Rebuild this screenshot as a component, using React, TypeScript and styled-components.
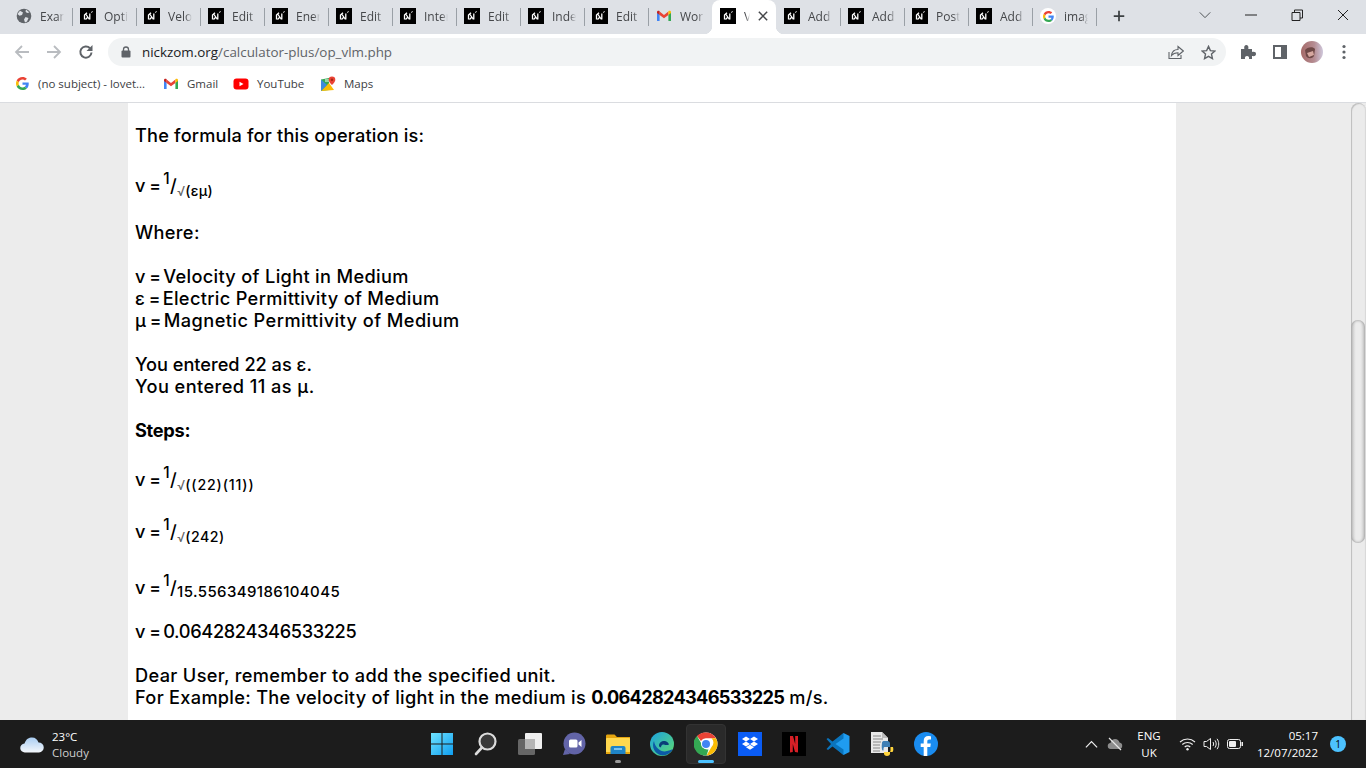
import React from "react";
import styled, { createGlobalStyle } from "styled-components";

const Global = createGlobalStyle`
  html, body { margin: 0; padding: 0; overflow: hidden; background: #fff; }
  * { box-sizing: border-box; }
`;

const Screen = styled.div`
  width: 1366px; height: 768px; display: flex; flex-direction: column; overflow: hidden;
  font-family: "Open Sans", "Liberation Sans", sans-serif;
`;

/* ---------- tab strip ---------- */
const TabStrip = styled.div`
  height: 34px; flex: none; background: #dee1e6; display: flex; align-items: stretch; padding-left: 8px;
`;
const Tab = styled.div<{ $active?: boolean; $sep?: boolean }>`
  width: 64px; position: relative; display: flex; align-items: center; gap: 8px; padding: 0 8px 2px;
  background: ${p => (p.$active ? "#fff" : "transparent")};
  border-radius: ${p => (p.$active ? "8px 8px 0 0" : "0")};
  ${p => p.$sep && `&::after { content: ""; position: absolute; right: -1px; top: 8px; width: 1px; height: 18px; background: #9aa0a6; }`}
  ${p => p.$active && `
    &::before { content: ""; position: absolute; left: -8px; bottom: 0; width: 8px; height: 8px; background: radial-gradient(circle at 0 0, transparent 8px, #fff 8.5px); }
    & > i { position: absolute; right: -8px; bottom: 0; width: 8px; height: 8px; background: radial-gradient(circle at 100% 0, transparent 8px, #fff 8.5px); }
  `}
`;
const TabTitle = styled.span<{ $active?: boolean }>`
  flex: 1; min-width: 0; overflow: hidden; white-space: nowrap; font-size: 12px; color: #45474a;
  -webkit-mask-image: linear-gradient(to right, #000 ${p => (p.$active ? "30%" : "72%")}, transparent);
  mask-image: linear-gradient(to right, #000 ${p => (p.$active ? "30%" : "72%")}, transparent);
`;
const IconSlot = styled.span`
  width: 16px; height: 16px; flex: none; display: flex; align-items: center; justify-content: center;
`;
const NewTab = styled.div`
  width: 46px; display: flex; align-items: center; justify-content: center; padding-bottom: 2px;
`;
const WindowControls = styled.div`
  margin-left: auto; display: flex; align-items: stretch; padding-bottom: 4px;
`;
const WinButton = styled.div`
  width: 46px; display: flex; align-items: center; justify-content: center;
`;

/* ---------- toolbar ---------- */
const Toolbar = styled.div`
  height: 34px; flex: none; background: #fff; display: flex; align-items: center; padding-top: 2px;
`;
const NavButton = styled.div`
  width: 32px; height: 28px; display: flex; align-items: center; justify-content: center; flex: none;
`;
const NavGroup = styled.div`
  display: flex; padding-left: 6px; width: 108px; flex: none;
`;
const Omnibox = styled.div`
  width: 1118px; height: 28px; background: #f1f3f4; border-radius: 14px; display: flex; align-items: center; padding: 0 2px 0 12px; flex: none;
`;
const Url = styled.div`
  font-size: 13.4px; color: #5f6368; margin-left: 10px;
  b { font-weight: 400; color: #202124; }
`;
const OmniActions = styled.div`
  margin-left: auto; display: flex;
`;
const ToolActions = styled.div`
  display: flex; padding-left: 6px; align-items: center;
`;

/* ---------- bookmarks ---------- */
const Bookmarks = styled.div`
  height: 35px; flex: none; background: #fff; border-bottom: 1px solid #dadce0; display: flex; align-items: center; padding: 0 0 3px 14px;
`;
const Bookmark = styled.div<{ $w: number }>`
  width: ${p => p.$w}px; display: flex; align-items: center; gap: 8px; font-size: 11.5px; color: #3c4043; white-space: nowrap; flex: none;
`;

/* ---------- page ---------- */
const Viewport = styled.div`
  flex: 1; min-height: 0; display: flex; background: #ececec;
`;
const PageArea = styled.div`
  flex: 1; min-width: 0; padding-left: 128px; padding-right: 175px;
`;
const Article = styled.main`
  height: 100%; background: #fff; padding: 21px 7px 0; color: #000;
  font-family: "Inter", "Liberation Sans", sans-serif; font-size: 18.2px; line-height: 22px; letter-spacing: 0.33px; font-weight: 470;
`;
const Para = styled.p`
  margin: 0 0 22px;
`;
const Line = styled.div<{ $track?: number }>`
  ${p => p.$track !== undefined && `letter-spacing: ${p.$track}px;`}
`;
const Bold = styled.strong`
  font-weight: 700;
`;
const BoldNum = styled(Bold)`
  letter-spacing: -0.72px;
`;
const Num = styled.span`
  letter-spacing: -0.35px;
`;
const Eq = styled.span`
  font-size: 17.5px; letter-spacing: -1.2px; line-height: 0;
`;
const Formula = styled.div<{ $top: number; $h: number }>`
  height: ${p => p.$h}px; padding-top: ${p => p.$top}px; margin-bottom: 22px; white-space: nowrap;
`;
const Sup = styled.span`
  font-size: 15.5px; vertical-align: 8px; line-height: 0;
`;
const Sub = styled.span<{ $large?: boolean; $track?: number }>`
  font-size: ${p => (p.$large ? "15px" : "14.2px")}; vertical-align: ${p => (p.$large ? "-3px" : "-4px")}; line-height: 0; font-weight: 470;
  letter-spacing: ${p => p.$track ?? 0.28}px;
`;
const Root = styled.span`
  font-size: 13px; color: #666; letter-spacing: 0; font-weight: 400;
`;

const Scrollbar = styled.div`
  width: 15px; flex: none; background: #ebebeb; border-radius: 8px 8px 0 0; padding-top: 217px;
  box-shadow: inset 1px 1px 1px #bdbdbd, inset -1px 0 1px #d8d8d8;
`;
const Thumb = styled.div`
  width: 14px; height: 223px; border-radius: 7px;
  background: linear-gradient(to right, #c4c4c4, #ececec 35%, #ececec 65%, #cccccc);
  box-shadow: inset 0 0 3px #8a8a8a;
`;

/* ---------- taskbar ---------- */
const Taskbar = styled.footer`
  height: 48px; flex: none; background: #1c1c1c; display: flex; align-items: center; color: #fff;
`;
const Weather = styled.div`
  width: 420px; flex: none; display: flex; align-items: center; padding: 1px 0 0 20px; gap: 8px; font-size: 11.5px; line-height: 16px;
`;
const WeatherText = styled.div`
  display: flex; flex-direction: column; span + span { color: #cfcfcf; }
`;
const Dock = styled.div`
  display: flex; width: 528px; flex: none;
`;
const DockSlot = styled.div<{ $active?: boolean; $dot?: boolean }>`
  width: 44px; height: 40px; position: relative; display: flex; align-items: center; justify-content: center;
  ${p => p.$active && `&::before { content: ""; position: absolute; left: 2px; right: 2px; top: 0; bottom: 0; background: #2a2a2a; border: 1px solid #333; border-radius: 4px; }`}
  ${p => p.$active && `&::after { content: ""; position: absolute; left: 14px; width: 16px; bottom: 1px; height: 3px; border-radius: 2px; background: #4cc2ff; }`}
  ${p => p.$dot && `&::after { content: ""; position: absolute; left: 19px; width: 6px; bottom: 1px; height: 3px; border-radius: 2px; background: #9a9a9a; }`}
  svg { position: relative; }
`;
const Tray = styled.div`
  margin-left: auto; display: flex; align-items: center; height: 100%; font-size: 11.5px;
`;
const TrayIcon = styled.div<{ $w: number; $ml?: number }>`
  width: ${p => p.$w}px; margin-left: ${p => p.$ml ?? 0}px; display: flex; justify-content: center; align-items: center; flex: none;
`;
const Lang = styled.div`
  width: 44px; text-align: center; line-height: 17px; flex: none;
`;
const Clock = styled.div`
  width: 71px; text-align: right; line-height: 17px; flex: none;
`;
const Badge = styled.div`
  width: 16px; height: 16px; border-radius: 50%; background: #4cc2ff; color: #000; font-size: 10px; line-height: 16px; text-align: center; margin: 0 20px 0 12px; flex: none;
`;

/* ---------- icons ---------- */
const NLogo = () => (
  <svg width="16" height="16" viewBox="0 0 16 16">
    <rect width="16" height="16" fill="#000" />
    <path d="M4.500 11.500V7l2.500-2.300M6 6.500l3.500 5M9.800 11.500V5.500M5.500 11.500l2-2" stroke="#fff" strokeWidth="1.300" fill="none" />
    <path d="M11 4.500l1.800-1" stroke="#fff" strokeWidth="1" opacity=".85" />
  </svg>
);
const GoogleG = ({ s = 16 }: { s?: number }) => (
  <svg width={s} height={s} viewBox="0 0 48 48">
    <path fill="#EA4335" d="M24 9.500c3.500 0 6.700 1.200 9.200 3.600l6.900-6.900C35.900 2.400 30.500 0 24 0 14.600 0 6.500 5.400 2.600 13.200l8 6.200C12.500 13.600 17.800 9.500 24 9.500z" />
    <path fill="#4285F4" d="M47 24.500c0-1.600-.1-3.100-.4-4.500H24v9h12.900c-.6 3-2.200 5.500-4.700 7.200l7.700 6C44.400 38.500 47 32 47 24.500z" />
    <path fill="#FBBC05" d="M10.500 28.600c-.5-1.400-.8-3-.8-4.600s.3-3.200.8-4.600l-8-6.200C.9 16.500 0 20.100 0 24s.9 7.500 2.600 10.800l7.900-6.200z" />
    <path fill="#34A853" d="M24 48c6.500 0 11.900-2.100 15.900-5.800l-7.700-6c-2.200 1.500-4.900 2.300-8.200 2.300-6.200 0-11.500-4.100-13.400-9.900l-8 6.200C6.500 42.600 14.600 48 24 48z" />
  </svg>
);
const GoogleBadge = styled.span`
  width: 16px; height: 16px; border-radius: 50%; background: #fff; display: flex; align-items: center; justify-content: center;
`;
const GmailIcon = () => (
  <svg width="16" height="16" viewBox="0 0 16 16">
    <path d="M1 4v9h2.600V6.800z" fill="#4285F4" />
    <path d="M15 4v9h-2.600V6.800z" fill="#34A853" />
    <path d="M3.600 7V3.600L8 7l4.400-3.400V7L8 10.300z" fill="#EA4335" />
    <path d="M1 4.200c0-1.200 1.500-1.800 2.600-1V7L1 5z" fill="#C5221F" />
    <path d="M15 4.200c0-1.200-1.500-1.800-2.600-1V7L15 5z" fill="#FBBC05" />
  </svg>
);
const YouTubeIcon = () => (
  <svg width="16" height="16" viewBox="0 0 16 16">
    <rect x="0.500" y="2.500" width="15" height="11" rx="3" fill="#f00" />
    <path d="M6.500 5.700v4.600L10.500 8z" fill="#fff" />
  </svg>
);
const MapsIcon = () => (
  <svg width="16" height="16" viewBox="0 0 16 16">
    <path d="M1 3.500 9 2v12l-8 1z" fill="#34A853" />
    <path d="M1 15 9 7l5 7z" fill="#FBBC05" />
    <path d="M1 3.500 7 9l-6 6z" fill="#4285F4" opacity=".85" />
    <path d="M5 3h5v3H5z" fill="#fff" opacity=".5" />
    <path d="M12 0.500a3.300 3.300 0 0 0-3.300 3.300C8.700 6.300 12 9 12 9s3.300-2.700 3.300-5.200A3.300 3.300 0 0 0 12 .5z" fill="#EA4335" />
    <circle cx="12" cy="3.800" r="1.200" fill="#a52714" />
  </svg>
);
const GlobeIcon = () => (
  <svg width="16" height="16" viewBox="0 0 16 16">
    <circle cx="8" cy="8" r="7.300" fill="#5f6368" />
    <path d="M4 2.800 7 4.500 6 7 3.500 7.800 1.500 6zM9.500 9l3 1-1.500 3.500-2 1-1-3zM10 1.500l3.500 3-2.500.5-1.500-1.500z" fill="#dee1e6" />
  </svg>
);
const CloseX = ({ s = 12, c = "#45474a", w = 1.8 }: { s?: number; c?: string; w?: number }) => (
  <svg width={s} height={s} viewBox="0 0 12 12"><path d="M1 1l10 10M11 1 1 11" stroke={c} strokeWidth={w} /></svg>
);
const Stroke = ({ d, c = "#5f6368", w = 2, s = 16, vb = 16 }: { d: string; c?: string; w?: number; s?: number; vb?: number }) => (
  <svg width={s} height={s} viewBox={`0 0 ${vb} ${vb}`}><path d={d} stroke={c} strokeWidth={w} fill="none" /></svg>
);

const WinLogo = () => (
  <svg width="24" height="24" viewBox="0 0 24 24">
    <defs><linearGradient id="wl" x1="0" y1="0" x2="1" y2="1"><stop offset="0" stopColor="#6fe3ff" /><stop offset="1" stopColor="#0f9ef0" /></linearGradient></defs>
    <path d="M1 1h10.500v10.500H1zM12.500 1H23v10.500H12.500zM1 12.500h10.500V23H1zM12.500 12.500H23V23H12.500z" fill="url(#wl)" />
  </svg>
);
const SearchIcon = () => (
  <svg width="24" height="24" viewBox="0 0 24 24">
    <circle cx="13.500" cy="9.500" r="8" fill="#3a3a3a" stroke="#dcdcdc" strokeWidth="2.200" />
    <path d="M8 15.500 2 22" stroke="#dcdcdc" strokeWidth="2.600" strokeLinecap="round" />
  </svg>
);
const TaskViewIcon = () => (
  <svg width="24" height="24" viewBox="0 0 24 24">
    <rect x="0" y="7" width="17" height="16" rx="1.500" fill="#666" />
    <rect x="7" y="1" width="17" height="16" rx="1" fill="#efefef" />
    <rect x="7" y="7" width="10" height="10" fill="#b5b5b5" />
  </svg>
);
const MeetIcon = () => (
  <svg width="24" height="24" viewBox="0 0 24 24">
    <circle cx="12.500" cy="11.500" r="11" fill="#6264a7" />
    <path d="M1 23l2-6 5 5z" fill="#6264a7" />
    <rect x="7" y="7.500" width="8.500" height="8" rx="1.500" fill="#fff" />
    <path d="M16.500 10.500 19.500 8v7l-3-2.500z" fill="#fff" />
  </svg>
);
const FolderIcon = () => (
  <svg width="24" height="24" viewBox="0 0 24 24">
    <path d="M0 4c0-1 .6-1.500 1.500-1.500h7L11 5h13v4H0z" fill="#e5a50f" />
    <rect x="0" y="6" width="24" height="16" rx="1" fill="#ffd84f" />
    <rect x="0" y="20" width="24" height="2" fill="#e5a50f" />
    <path d="M4.500 16a2 2 0 0 1 2-2h11a2 2 0 0 1 2 2v6h-15z" fill="#1f84c6" />
    <rect x="8" y="16" width="8" height="2" fill="#7cc3ef" />
  </svg>
);
const EdgeIcon = () => (
  <svg width="24" height="24" viewBox="0 0 24 24">
    <defs>
      <linearGradient id="eg" x1="0" y1="0" x2="1" y2="1"><stop offset="0" stopColor="#1ba1e2" /><stop offset="1" stopColor="#5fdc6e" /></linearGradient>
    </defs>
    <circle cx="12" cy="12" r="12" fill="url(#eg)" />
    <path d="M23 17c-3 6-11 8-15 5-5-3-6-9-4-13 1 7 8 12 13 10 2-.5 4-1 6-2z" fill="#0c5aa6" />
    <path d="M9 13.500c0-3 3-5 6-4.500 2 .5 3.500 1.500 4 3.500-2 1-4 .5-5 0-2-.5-3 1-3 3-1.500-.5-2-1-2-2z" fill="#0a3d78" />
  </svg>
);
const ChromeIcon = () => (
  <svg width="24" height="24" viewBox="0 0 48 48">
    <circle cx="24" cy="24" r="23" fill="#fff" />
    <path d="M24 1a23 23 0 0 1 19.900 11.500H24A11.500 11.500 0 0 0 13.900 18L6 8A23 23 0 0 1 24 1z" fill="#EA4335" />
    <path d="M43.900 12.500A23 23 0 0 1 25 47l10-17.200a11.500 11.500 0 0 0 0-17.300z" fill="#FBBC05" />
    <path d="M25 47A23 23 0 0 1 6 8l9.900 17.200A11.500 11.500 0 0 0 29 35z" fill="#34A853" />
    <circle cx="24" cy="24" r="10" fill="#fff" />
    <circle cx="24" cy="24" r="8" fill="#4285F4" />
  </svg>
);
const DropboxIcon = () => (
  <svg width="24" height="24" viewBox="0 0 24 24">
    <rect width="24" height="24" fill="#0a5cf5" />
    <path d="M8 4.500 4 7l4 2.500L12 7zM16 4.500 12 7l4 2.500L20 7zM4 12l4 2.500 4-2.500-4-2.500zM16 9.500 12 12l4 2.500 4-2.500zM8 15.300l4 2.500 4-2.500-4-2.500z" fill="#fff" />
  </svg>
);
const NetflixIcon = () => (
  <svg width="24" height="24" viewBox="0 0 24 24">
    <rect width="24" height="24" fill="#000" />
    <path d="M8 4h3l2.200 8V4H16v16.500l-3-.5-2.200-8v8L8 20.500z" fill="#d81f26" />
  </svg>
);
const VSCodeIcon = () => (
  <svg width="24" height="24" viewBox="0 0 24 24">
    <path d="M17.500 1 23.500 4v16l-6 3L6.500 12.500z" fill="#1f9cf0" />
    <path d="M17.500 6.500 9.500 12l8 5.500V23L6.500 14.500 2 18 .5 17l4.500-5L.5 7 2 6l4.500 3.500L17.500 1z" fill="#0a74bd" />
  </svg>
);
const PythonFileIcon = () => (
  <svg width="24" height="24" viewBox="0 0 24 24">
    <path d="M1 0h11l6 6v15H1z" fill="#e8e8e8" />
    <path d="M3 4h8M3 7h10M3 10h8M3 13h7M3 16h7M3 19h7" stroke="#888" strokeWidth="1" />
    <path d="M12 0v6h6z" fill="#bbb" />
    <path d="M12 11c0-1.500 1-2 2.500-2h3c1.500 0 2.500 1 2.500 2.500V15h-5c-1 0-1.500.5-1.500 1.500v2h-1c-.8-1-1-4.500-.5-7.500z" fill="#3f7fb5" />
    <path d="M23 15c.5 2 .5 4-.5 5H20v1.500c0 1.500-1 2.500-3 2.500s-3-1-3-2.500V20h5c1 0 1.500-.5 1.500-1.500V15z" fill="#ffd43b" />
  </svg>
);
const FacebookIcon = () => (
  <svg width="24" height="24" viewBox="0 0 24 24">
    <circle cx="12" cy="12" r="12" fill="#1a8cf0" />
    <path d="M13.300 24v-9h3l.5-3.500h-3.500V9.300c0-1 .5-1.900 2-1.900H17V4.400s-1.400-.3-2.700-.3c-2.800 0-4.600 1.700-4.600 4.800v2.600H6.700V15h3v9z" fill="#fff" />
  </svg>
);

const tabs = ["Exam", "Optics", "Velocity", "Edit Post", "Energy", "Edit Post", "Internal", "Edit Post", "Index", "Edit Post", "Work", "Velocity", "Add New", "Add New", "Posts", "Add New", "image"];
const ACTIVE = 11;

const tabIcon = (i: number) => {
  if (i === 0) return <GlobeIcon />;
  if (i === 10) return <GmailIcon />;
  if (i === 16) return <GoogleBadge><GoogleG s={11} /></GoogleBadge>;
  return <NLogo />;
};

export default function App() {
  return (
    <Screen>
      <Global />
      <TabStrip>
        {tabs.map((t, i) => (
          <Tab key={i} $active={i === ACTIVE} $sep={i !== ACTIVE && i !== ACTIVE - 1}>
            <IconSlot>{tabIcon(i)}</IconSlot>
            <TabTitle $active={i === ACTIVE}>{t}</TabTitle>
            {i === ACTIVE && <><CloseX s={10} c="#45474a" /><i /></>}
          </Tab>
        ))}
        <NewTab><Stroke d="M8 2v12M2 8h12" c="#3c4043" w={2} s={14} /></NewTab>
        <WindowControls>
          <WinButton><Stroke d="M2 5l6 6 6-6" c="#3c4043" w={1} s={14} /></WinButton>
          <WinButton><Stroke d="M2 8h12" c="#222" w={1} /></WinButton>
          <WinButton><Stroke d="M3 5.500h8v8H3zM5.500 5.500V3h8v8H11" c="#222" w={1} /></WinButton>
          <WinButton><CloseX s={12} c="#222" w={1} /></WinButton>
        </WindowControls>
      </TabStrip>

      <Toolbar>
        <NavGroup>
          <NavButton><Stroke d="M15 8H2M8 2 2 8l6 6" c="#b9bcc0" w={1.800} /></NavButton>
          <NavButton><Stroke d="M1 8h13M8 2l6 6-6 6" c="#b9bcc0" w={1.800} /></NavButton>
          <NavButton>
            <svg width="16" height="16" viewBox="0 0 16 16">
              <path d="M13.500 8.500a5.600 5.600 0 1 1-1.500-4.300" stroke="#5f6368" strokeWidth="2" fill="none" />
              <path d="M14.500 1v6h-6z" fill="#5f6368" />
            </svg>
          </NavButton>
        </NavGroup>
        <Omnibox>
          <svg width="12" height="12" viewBox="0 0 12 12">
            <rect x="1.500" y="4.500" width="9" height="7" rx="1" fill="#5f6368" />
            <path d="M3.500 5V3.500a2.500 2.500 0 0 1 5 0V5" stroke="#5f6368" strokeWidth="1.300" fill="none" />
          </svg>
          <Url><b>nickzom.org</b>/calculator-plus/op_vlm.php</Url>
          <OmniActions>
            <NavButton><svg width="16" height="16" viewBox="0 0 16 16"><path d="M1 8v6.500h12V11M3.500 11.500C4 7.500 7 5.500 10 5.500V2.500L15.300 7 10 11.500V8.700c-2.500 0-5 .8-6.500 2.800z" stroke="#5f6368" strokeWidth="1.100" fill="none" /></svg></NavButton>
            <NavButton><svg width="15" height="15" viewBox="0 0 16 16"><path d="M8 1.500 10 6l4.800.5-3.600 3.200 1 4.800L8 12.100 3.800 14.500l1-4.800L1.200 6.500 6 6z" stroke="#5f6368" strokeWidth="1.500" fill="none" /></svg></NavButton>
          </OmniActions>
        </Omnibox>
        <ToolActions>
          <NavButton><svg width="16" height="16" viewBox="0 0 16 16"><path d="M1 5h3.300c-.5-3 .5-4 2-4s2.500 1 2 4H12v3c3-.5 4 .5 4 2s-1 2.500-4 2v3H9c.5-2-.5-3-2-3s-2.500 1-2 3H1z" fill="#5f6368" /></svg></NavButton>
          <NavButton><svg width="14" height="14" viewBox="0 0 14 14"><path d="M0 0h14v14H0zM2 2v10h6V2z" fill="#5f6368" fillRule="evenodd" /></svg></NavButton>
          <NavButton>
            <svg width="22" height="22" viewBox="0 0 22 22">
              <defs><linearGradient id="av" x1="0" y1="0" x2="1" y2="0"><stop offset="0" stopColor="#a56a68" /><stop offset=".6" stopColor="#b58c92" /><stop offset="1" stopColor="#cfc8dc" /></linearGradient></defs>
              <circle cx="11" cy="11" r="11" fill="url(#av)" />
              <path d="M4 9c2-3 8-4 10-1l-1 7c-2 3-6 3-8 0z" fill="#6e4846" />
              <path d="M6 12l6-2 1 4-5 2z" fill="#d6a8a0" />
            </svg>
          </NavButton>
          <NavButton>
            <svg width="4" height="16" viewBox="0 0 4 16"><circle cx="2" cy="2.500" r="1.600" fill="#5f6368" /><circle cx="2" cy="8" r="1.600" fill="#5f6368" /><circle cx="2" cy="13.500" r="1.600" fill="#5f6368" /></svg>
          </NavButton>
        </ToolActions>
      </Toolbar>

      <Bookmarks>
        <Bookmark $w={149}><IconSlot><GoogleG s={13} /></IconSlot><span>(no subject) - lovet...</span></Bookmark>
        <Bookmark $w={70}><IconSlot><GmailIcon /></IconSlot><span>Gmail</span></Bookmark>
        <Bookmark $w={87}><IconSlot><YouTubeIcon /></IconSlot><span>YouTube</span></Bookmark>
        <Bookmark $w={70}><IconSlot><MapsIcon /></IconSlot><span>Maps</span></Bookmark>
      </Bookmarks>

      <Viewport>
        <PageArea>
          <Article>
            <Para><Line $track={0.18}>The formula for this operation is:</Line></Para>
            <Formula $top={6} $h={31}>v<Eq> = </Eq><Sup>1</Sup>/<Sub><Root>√</Root>(εμ)</Sub></Formula>
            <Para>Where:</Para>
            <Para>
              <Line>v<Eq> = </Eq>Velocity of Light in Medium</Line>
              <Line>ε<Eq> = </Eq>Electric Permittivity of Medium</Line>
              <Line $track={0.43}>μ<Eq> = </Eq>Magnetic Permittivity of Medium</Line>
            </Para>
            <Para>
              <Line $track={-0.02}>You entered 22 as ε.</Line>
              <Line $track={0.43}>You entered 11 as μ.</Line>
            </Para>
            <Para><Line $track={-0.3}><Bold>Steps:</Bold></Line></Para>
            <Formula $top={5} $h={30}>v<Eq> = </Eq><Sup>1</Sup>/<Sub $track={0.85}><Root>√</Root>((22)(11))</Sub></Formula>
            <Formula $top={5} $h={30}>v<Eq> = </Eq><Sup>1</Sup>/<Sub $track={0.5}><Root>√</Root>(242)</Sub></Formula>
            <Formula $top={9} $h={31}>v<Eq> = </Eq><Sup>1</Sup>/<Sub $large $track={0.4}>15.556349186104045</Sub></Formula>
            <Para>v<Eq> = </Eq><Num>0.0642824346533225</Num></Para>
            <Para>
              <Line>Dear User, remember to add the specified unit.</Line>
              <Line $track={0.29}>For Example: The velocity of light in the medium is <BoldNum>0.0642824346533225</BoldNum> m/s.</Line>
            </Para>
          </Article>
        </PageArea>
        <Scrollbar><Thumb /></Scrollbar>
      </Viewport>

      <Taskbar>
        <Weather>
          <svg width="24" height="16" viewBox="0 0 24 16">
            <defs><linearGradient id="cl" x1="0" y1="0" x2="0" y2="1"><stop offset="0" stopColor="#a9cdf2" /><stop offset="1" stopColor="#f4f7fb" /></linearGradient></defs>
            <path d="M5 15.500a4.500 4.500 0 0 1-.5-9C6 2 9 .5 12 .5c3.500 0 5.500 2 6.500 5a5 5 0 0 1 .5 10z" fill="url(#cl)" />
          </svg>
          <WeatherText><span>23°C</span><span>Cloudy</span></WeatherText>
        </Weather>
        <Dock>
          <DockSlot><WinLogo /></DockSlot>
          <DockSlot><SearchIcon /></DockSlot>
          <DockSlot><TaskViewIcon /></DockSlot>
          <DockSlot><MeetIcon /></DockSlot>
          <DockSlot $dot><FolderIcon /></DockSlot>
          <DockSlot><EdgeIcon /></DockSlot>
          <DockSlot $active><ChromeIcon /></DockSlot>
          <DockSlot><DropboxIcon /></DockSlot>
          <DockSlot><NetflixIcon /></DockSlot>
          <DockSlot><VSCodeIcon /></DockSlot>
          <DockSlot><PythonFileIcon /></DockSlot>
          <DockSlot><FacebookIcon /></DockSlot>
        </Dock>
        <Tray>
          <TrayIcon $w={24}><Stroke d="M2 11l6-6 6 6" c="#eee" w={1.300} s={15} /></TrayIcon>
          <TrayIcon $w={24}>
            <svg width="16" height="14" viewBox="0 0 16 14">
              <path d="M4 12a3 3 0 0 1-.5-6C4 3 6 2 8 2c2.500 0 3.800 1.500 4.500 3.500a3.300 3.300 0 0 1 0 6.500z" fill="#8d8d8d" />
              <path d="M2 1l12 12" stroke="#e6e6e6" strokeWidth="1.300" />
            </svg>
          </TrayIcon>
          <Lang>ENG<br />UK</Lang>
          <TrayIcon $w={24} $ml={4}>
            <svg width="17" height="14" viewBox="0 0 17 14">
              <path d="M1 5c4.300-4 10.700-4 15 0M3.300 7.500c3-2.700 7.400-2.700 10.400 0M5.700 10c1.500-1.300 4-1.300 5.600 0" stroke="#eee" strokeWidth="1.100" fill="none" />
              <circle cx="8.500" cy="12.300" r="1.200" fill="#eee" />
            </svg>
          </TrayIcon>
          <TrayIcon $w={24}>
            <svg width="17" height="14" viewBox="0 0 17 14">
              <path d="M1 4.500v5h2.500L7.500 12.500v-11L3.500 4.500z" stroke="#eee" strokeWidth="1" fill="none" />
              <path d="M10 5c.8 1.200.8 2.800 0 4M12 3.300c1.600 2.200 1.600 5.200 0 7.400M14 1.800c2.300 3 2.300 7.400 0 10.400" stroke="#eee" strokeWidth="1" fill="none" />
            </svg>
          </TrayIcon>
          <TrayIcon $w={24}>
            <svg width="16" height="10" viewBox="0 0 16 10">
              <rect x=".5" y=".5" width="13" height="9" rx="2" stroke="#eee" fill="none" />
              <rect x="2" y="2" width="7" height="6" rx="1" fill="#eee" />
              <rect x="14.500" y="3" width="1.500" height="4" fill="#eee" />
            </svg>
          </TrayIcon>
          <Clock>05:17<br />12/07/2022</Clock>
          <Badge>1</Badge>
        </Tray>
      </Taskbar>
    </Screen>
  );
}
